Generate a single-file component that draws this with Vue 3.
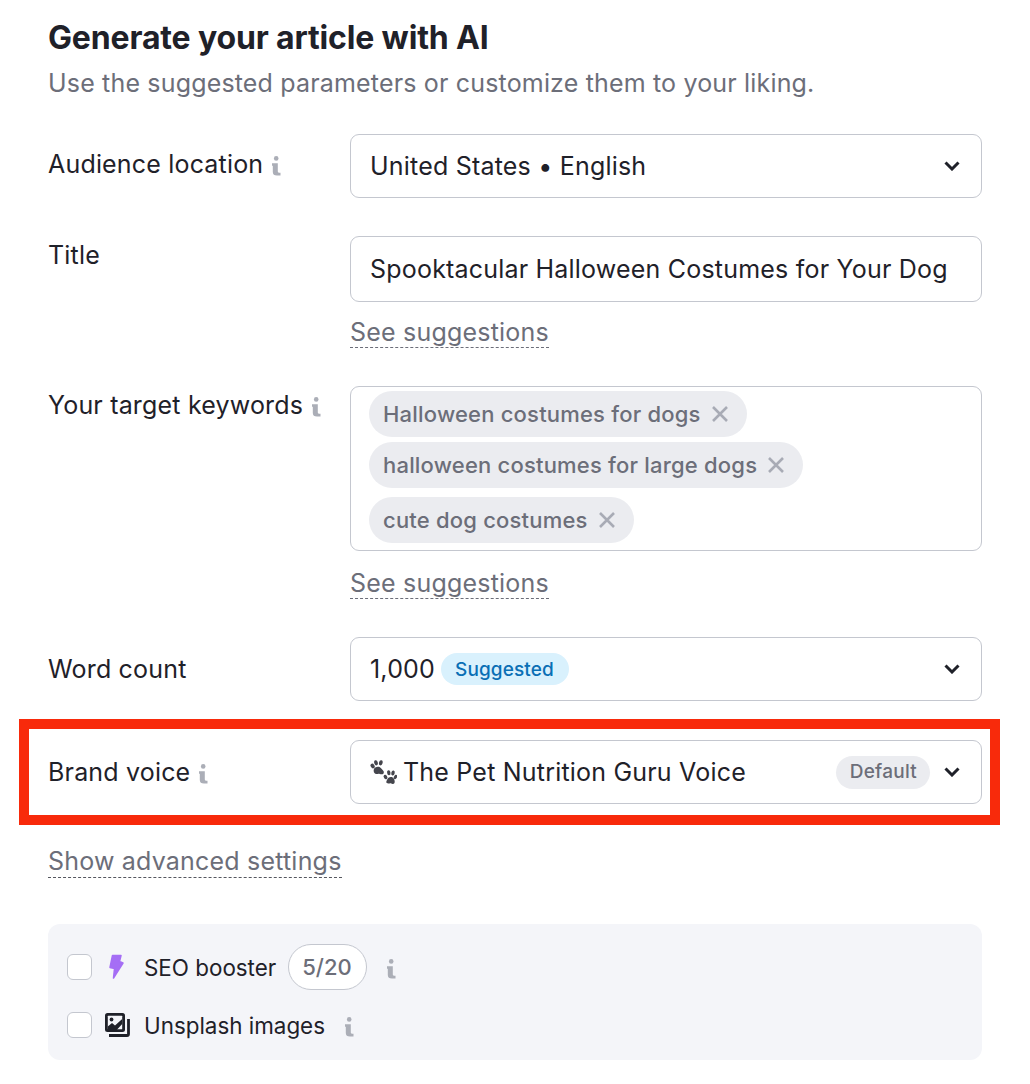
<template>
  <div class="page">
    <h1 class="title">Generate your article with AI</h1>
    <p class="subtitle">Use the suggested parameters or customize them to your liking.</p>

    <div class="row row-location">
      <div class="label">Audience location <InfoIcon /></div>
      <div class="select">
        <span class="value">United States • English</span>
        <svg class="chevron" viewBox="0 0 16 10"><path d="M1.500 1.500L8 8l6.500-6.500" /></svg>
      </div>
    </div>

    <div class="row row-title">
      <div class="label label-top">Title</div>
      <div>
        <div class="input"><span class="value">Spooktacular Halloween Costumes for Your Dog</span></div>
        <a class="link see">See suggestions</a>
      </div>
    </div>

    <div class="row row-keywords">
      <div class="label label-top">Your target keywords <InfoIcon /></div>
      <div>
        <div class="tags">
          <span v-for="k in keywords" :key="k" class="tag">
            {{ k }}
            <svg class="tag-x" viewBox="0 0 18 18"><path d="M2 2l14 14M16 2L2 16" /></svg>
          </span>
        </div>
        <a class="link see see-keywords">See suggestions</a>
      </div>
    </div>

    <div class="row row-count">
      <div class="label">Word count</div>
      <div class="select">
        <span class="value">1,000</span>
        <span class="suggested">Suggested</span>
        <svg class="chevron" viewBox="0 0 16 10"><path d="M1.500 1.500L8 8l6.500-6.500" /></svg>
      </div>
    </div>

    <div class="row row-brand">
      <div class="label">Brand voice <InfoIcon /></div>
      <div class="select">
        <svg class="paw" viewBox="0 0 27 24">
          <ellipse cx="2.600" cy="6" rx="1.900" ry="2.500" transform="rotate(-35 2.600 6)" />
          <ellipse cx="6" cy="2.800" rx="1.800" ry="2.600" transform="rotate(-15 6 2.800)" />
          <ellipse cx="10.800" cy="2.800" rx="1.800" ry="2.600" transform="rotate(15 10.800 2.800)" />
          <path d="M3.800 9.500c.6-2.500 5-3.800 7-1.500 1.500 1.700 3.500 3 3 5-.4 1.500-2.400 1.500-4 .9-1.600-.6-2.800.4-4 0-1.800-.6-2.500-2.600-2-4.400z" />
          <ellipse cx="15.500" cy="17" rx="1.700" ry="2.300" transform="rotate(-35 15.500 17)" />
          <ellipse cx="18.800" cy="12.800" rx="1.700" ry="2.500" transform="rotate(-10 18.800 12.800)" />
          <ellipse cx="23" cy="13" rx="1.700" ry="2.500" transform="rotate(15 23 13)" />
          <ellipse cx="25.500" cy="17" rx="1.500" ry="2.300" transform="rotate(30 25.500 17)" />
          <path d="M17 20c1-3.500 5.500-4 7-1 1 1.800 1.200 4.600-1 4.900-1.400.2-2-.7-3.300-.5-1.700.3-3.400.2-3.400-1.300 0-.8.300-1.400.7-2.100z" />
        </svg>
        <span class="value">The Pet Nutrition Guru Voice</span>
        <span class="default">Default</span>
        <svg class="chevron chevron-brand" viewBox="0 0 16 10"><path d="M1.500 1.500L8 8l6.500-6.500" /></svg>
      </div>
    </div>

    <a class="link advanced">Show advanced settings</a>

    <div class="panel">
      <div class="option option-seo">
        <span class="check"></span>
        <svg class="bolt" viewBox="0 0 15 26">
          <path d="M3.500 1.500h8.500l-1.500 6 3.500 1.500L4.500 24l1-9.500-4.500-1z" />
        </svg>
        <span class="option-label">SEO booster</span>
        <span class="count">5/20</span>
        <InfoIcon class="info-seo" />
      </div>
      <div class="option">
        <span class="check"></span>
        <svg class="photos" viewBox="0 0 25 24">
          <rect x="0" y="0" width="20" height="19" rx="2.500" fill="#1f2129" />
          <rect x="2.800" y="2.800" width="14.400" height="13.400" rx=".5" fill="#f4f5f9" />
          <circle cx="6.500" cy="6.500" r="1.900" fill="#1f2129" />
          <path d="M2.800 13.500l4.200-3.500 3 2.500 7.200-6.500v5l-6 6.500H2.800z" fill="#1f2129" />
          <path d="M23.500 6v15a1.500 1.500 0 0 1-1.500 1.500H4" fill="none" stroke="#1f2129" stroke-width="2.800" />
        </svg>
        <span class="option-label">Unsplash images</span>
        <InfoIcon class="info-unsplash" />
      </div>
    </div>
  </div>
</template>

<script setup>
import { h } from 'vue'

const keywords = [
  'Halloween costumes for dogs',
  'halloween costumes for large dogs',
  'cute dog costumes'
]

// little italic "i" used next to labels
const InfoIcon = () =>
  h('svg', { class: 'info', viewBox: '0 0 10 20', width: 10, height: 20 }, [
    h('circle', { cx: 5.200, cy: 2.400, r: 2.300 }),
    h('path', { d: 'M1 7.200h5.800v8c0 1 .6 1.600 2.700 1.600v2.700H6c-2.800 0-4.200-1.400-4.200-3.600V9.800H1z' })
  ])
</script>

<style>
body {
  background: #fff;
}
</style>

<style scoped>
.page {
  width: 1030px;
  height: 1084px;
  box-sizing: border-box;
  padding: 19px 48px 0;
  font-family: Inter, "Liberation Sans", sans-serif;
  color: #1f2129;
  overflow: hidden;
}

.title {
  margin: 0;
  font-size: 32px;
  line-height: 38px;
  font-weight: 700;
  letter-spacing: -0.15px;
}

.subtitle {
  margin: 10px 0 0;
  font-size: 25px;
  line-height: 32px;
  letter-spacing: 0.17px;
  color: #6c6e79;
}

.row {
  display: grid;
  grid-template-columns: 302px 632px;
  align-items: center;
}

.row-location {
  margin-top: 35px;
}

.row-location .label {
  margin-bottom: 4px;
}

.row-title {
  margin-top: 38px;
  align-items: start;
}

.row-keywords {
  margin-top: 38px;
  align-items: start;
}

.row-count {
  margin-top: 38px;
}

.row-brand {
  margin: 18px -29px 0;
  padding: 11px 8px 11px 19px;
  width: 981px;
  box-sizing: border-box;
  border: 10px solid #f82a0b;
}

.label {
  display: flex;
  align-items: center;
  gap: 8px;
  font-size: 25px;
  line-height: 32px;
  letter-spacing: 0.18px;
}

.label-top {
  padding-top: 3px;
}

.info {
  fill: #abaeb7;
  flex-shrink: 0;
  margin-top: 3px;
}

.select,
.input {
  display: flex;
  align-items: center;
  box-sizing: border-box;
  height: 64px;
  padding: 0 21px 0 19px;
  border: 1px solid #c4c7cf;
  border-radius: 9px;
  background: #fff;
}

.input {
  height: 66px;
}

.value {
  font-size: 25px;
  line-height: 32px;
  letter-spacing: 0.2px;
  white-space: nowrap;
}

.chevron {
  width: 16px;
  height: 10px;
  margin-left: auto;
  fill: none;
  stroke: #1f2129;
  stroke-width: 3;
  flex-shrink: 0;
}

.see {
  margin-top: 15px;
}

.see-keywords {
  margin-top: 17px;
}

.link {
  display: table;
  font-size: 25px;
  line-height: 30px;
  letter-spacing: 0.2px;
  color: #6c6e79;
  border-bottom: 1px dashed #6c6e79;
}

.tags {
  box-sizing: border-box;
  height: 165px;
  padding: 4px 18px;
  display: flex;
  flex-direction: column;
  align-items: flex-start;
  gap: 5px;
  border: 1px solid #c4c7cf;
  border-radius: 9px;
}

.tag {
  display: inline-flex;
  align-items: center;
  gap: 10px;
  height: 46px;
  padding: 0 18px 0 14px;
  border-radius: 23px;
  background: #ebecf0;
  color: #6c6e79;
  font-size: 22px;
  letter-spacing: 0.2px;
  font-weight: 500;
  white-space: nowrap;
}

.tag:last-child {
  margin-top: 4px;
}

.tag-x {
  width: 18px;
  height: 18px;
  fill: none;
  stroke: #a8abb5;
  stroke-width: 2.600;
}

.suggested {
  margin-left: 6px;
  padding: 0 15px 0 14px;
  height: 32px;
  line-height: 33px;
  border-radius: 16px;
  background: #d9f1fd;
  color: #0a6fb5;
  font-size: 19px;
  letter-spacing: 0.1px;
  font-weight: 500;
}

.paw {
  width: 27px;
  height: 24px;
  fill: #45464d;
  margin-right: 6px;
  flex-shrink: 0;
}

.default {
  margin-left: auto;
  height: 33px;
  line-height: 32px;
  padding: 0 13px 0 14px;
  border-radius: 17px;
  background: #ebecf0;
  color: #6c6e79;
  font-size: 19px;
  letter-spacing: 0.25px;
  font-weight: 500;
}

.chevron-brand {
  margin-left: 14px;
}

.advanced {
  margin-top: 20px;
  line-height: 32px;
  border-bottom-color: #55575f;
}

.panel {
  margin-top: 46px;
  height: 136px;
  box-sizing: border-box;
  padding: 20px 19px 0;
  background: #f4f5f9;
  border-radius: 12px;
}

.option {
  display: flex;
  align-items: center;
  height: 46px;
}

.option-seo {
  margin-bottom: 12px;
}

.check {
  width: 25px;
  height: 26px;
  box-sizing: border-box;
  border: 1px solid #c4c7cf;
  border-radius: 6px;
  background: #fff;
  flex-shrink: 0;
}

.bolt {
  width: 15px;
  height: 26px;
  margin: 0 20px 0 17px;
  fill: #a56ef5;
  stroke: #a56ef5;
  stroke-width: 1.500;
  stroke-linejoin: round;
  flex-shrink: 0;
}

.photos {
  width: 25px;
  height: 24px;
  margin: 0 14px 0 13px;
  flex-shrink: 0;
}

.option-label {
  font-size: 22.400px;
  white-space: nowrap;
}

.count {
  margin-left: 12px;
  height: 46px;
  line-height: 44px;
  box-sizing: border-box;
  padding: 0 14px 0 13px;
  border: 1px solid #c4c7cf;
  border-radius: 23px;
  background: #fff;
  color: #6c6e79;
  font-size: 22px;
  font-weight: 500;
}

.info-seo {
  margin-left: 19px;
}

.info-unsplash {
  margin-left: 19px;
}
</style>
